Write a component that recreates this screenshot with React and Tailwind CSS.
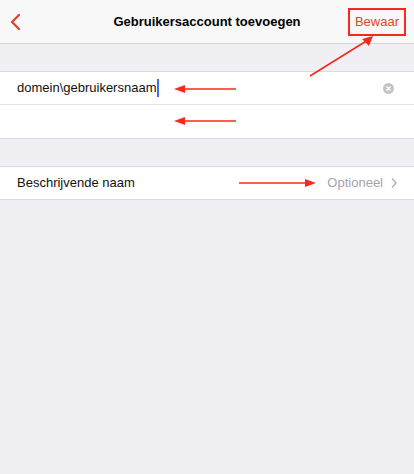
import React from "react";

export default function App() {
  return (
    <div className="relative w-[414px] h-[474px] bg-[#f0eff4] overflow-hidden" style={{ fontFamily: '"Liberation Sans", Arial, sans-serif' }}>
      {/* nav */}
      <div className="h-[44px] bg-[#f8f8f8] border-b border-[#d8d8dc] flex items-center relative">
        <svg width="14" height="18" viewBox="0 0 14 18" className="ml-[9px]">
          <path d="M10 2 L3 9 L10 16" fill="none" stroke="#e0452d" strokeWidth="2.4" strokeLinecap="round" strokeLinejoin="round" />
        </svg>
        <div className="absolute left-0 right-0 text-center text-[13px] font-bold text-black pointer-events-none">Gebruikersaccount toevoegen</div>
        <div className="ml-auto mr-[8px] border-2 border-[#f5291c] h-[28px] px-[5px] flex items-center text-[13px] text-[#e0452d]">Bewaar</div>
      </div>
      <div className="h-[27px]" />
      {/* fields */}
      <div className="bg-white border-y border-[#dcdce0]">
        <div className="h-[33px] flex items-center pl-[17px] pr-[20px] border-b border-[#e2e2e6]">
          <span className="text-[13px] text-[#111]">domein\gebruikersnaam</span>
          <span className="w-[2px] h-[18px] bg-[#3b6ff5] ml-[1px]" />
          <div className="ml-auto w-[11px] h-[11px] rounded-full bg-[#c4c4c8] flex items-center justify-center">
            <svg width="5" height="5" viewBox="0 0 5 5"><path d="M0.5 0.5 L4.5 4.5 M4.5 0.5 L0.5 4.5" stroke="white" strokeWidth="1.2" /></svg>
          </div>
        </div>
        <div className="h-[33px]" />
      </div>
      <div className="h-[27px]" />
      <div className="bg-white border-y border-[#dcdce0] h-[34px] flex items-center pl-[17px] pr-[16px]">
        <span className="text-[13px] text-[#111]">Beschrijvende naam</span>
        <span className="ml-auto text-[13px] text-[#a3a3a8]">Optioneel</span>
        <svg width="8" height="12" viewBox="0 0 8 12" className="ml-[7px]">
          <path d="M2 1.5 L6 6 L2 10.5" fill="none" stroke="#b0b0b5" strokeWidth="1.4" />
        </svg>
      </div>
      {/* annotations */}
      <svg className="absolute left-0 top-0" width="414" height="474">
        <line x1="310" y1="76" x2="368" y2="40" stroke="#f5291c" strokeWidth="1.6" />
        <path d="M373 36 L362 39 L369 46 Z" fill="#f5291c" />
        <line x1="236" y1="89" x2="182" y2="89" stroke="#f5291c" strokeWidth="1.6" />
        <path d="M174 89 L185 85 L185 93 Z" fill="#f5291c" />
        <line x1="236" y1="121" x2="182" y2="121" stroke="#f5291c" strokeWidth="1.6" />
        <path d="M174 121 L185 117 L185 125 Z" fill="#f5291c" />
        <line x1="239" y1="183" x2="306" y2="183" stroke="#f5291c" strokeWidth="1.6" />
        <path d="M316 183 L305 179 L305 187 Z" fill="#f5291c" />
      </svg>
    </div>
  );
}
